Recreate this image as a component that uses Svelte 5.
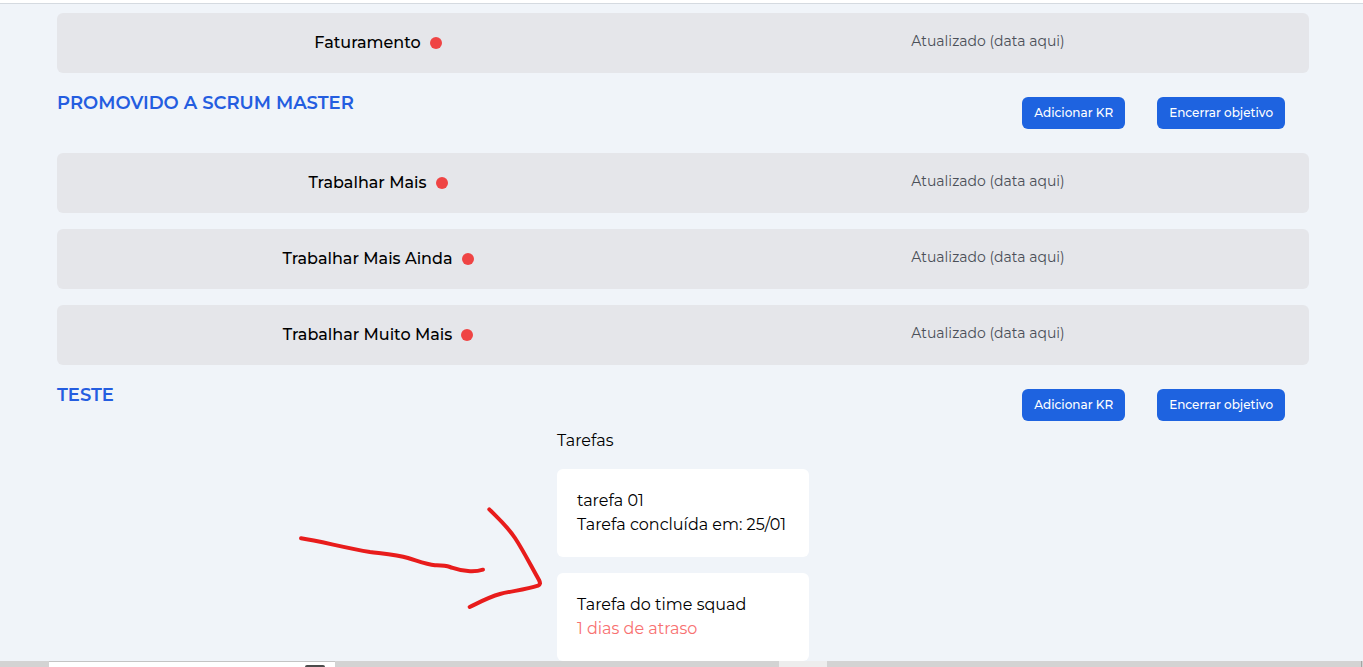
<script>
  const objectives = [
    { title: '', keyResults: ['Faturamento'], tasks: [] },
    {
      title: 'PROMOVIDO A SCRUM MASTER',
      keyResults: ['Trabalhar Mais', 'Trabalhar Mais Ainda', 'Trabalhar Muito Mais'],
      tasks: []
    },
    {
      title: 'TESTE',
      keyResults: [],
      tasks: [
        { name: 'tarefa 01', status: 'Tarefa concluída em: 25/01', late: false },
        { name: 'Tarefa do time squad', status: '1 dias de atraso', late: true }
      ]
    }
  ];
</script>

<div class="screen">
  <div class="topbar"></div>
  <main>
    {#each objectives as objective}
      <section>
        {#if objective.title}
          <header>
            <h2>{objective.title}</h2>
            <div class="actions">
              <button type="button">Adicionar KR</button>
              <button type="button">Encerrar objetivo</button>
            </div>
          </header>
        {/if}

        {#if objective.keyResults.length}
          <ul class="results">
            {#each objective.keyResults as name}
              <li class="result">
                <span class="name">{name}<span class="dot"></span></span>
                <span class="updated">Atualizado (data aqui)</span>
              </li>
            {/each}
          </ul>
        {/if}

        {#if objective.tasks.length}
          <div class="tasks">
            <h3>Tarefas</h3>
            {#each objective.tasks as task}
              <article>
                <p>{task.name}</p>
                <p class:late={task.late}>{task.status}</p>
              </article>
            {/each}
          </div>
        {/if}
      </section>
    {/each}
  </main>

  <svg class="arrow" width="250" height="110" viewBox="295 503 250 110" aria-hidden="true">
    <path d="M301 538.3C320 541 345 548 370 552C386 554 398 555 408 558C418 561 427 564.5 435 565.3C440 565.5 445 565.5 450 567C456 569 460 571 470 571.3C475 571.5 479 571 483 569.7" />
    <path d="M489.300 509.300C499 519 507 526 515 538C523 550 531 566 539 580C540.500 583 540.500 584.500 538 585.700C525 590 511 591 500 594C489 597 480 602 469.700 607" />
  </svg>

  <footer>
    <div class="search"><span class="glyph"></span></div>
    <div class="active"></div>
    <div class="corner"></div>
  </footer>
</div>

<style>
  :global(body) {
    margin: 0;
    background: #f0f4f9;
  }
  .screen {
    position: relative;
    display: flex;
    flex-direction: column;
    height: 100vh;
    overflow: hidden;
    font-family: Montserrat, Inter, sans-serif;
    font-size: 16px;
    line-height: 24px;
    color: #000;
  }
  .topbar {
    flex: none;
    height: 3px;
    background: #fff;
    border-bottom: 1px solid #d5dae0;
  }
  main {
    flex: 1;
    min-height: 0;
    overflow: hidden;
    padding: 9px 54px 0 57px;
  }
  header {
    display: flex;
    justify-content: space-between;
    align-items: flex-start;
    padding: 16px 24px 0 0;
  }
  h2 {
    margin: 0;
    font-size: 18px;
    line-height: 28px;
    font-weight: 600;
    color: #245de0;
  }
  .actions {
    display: flex;
    gap: 32px;
    padding-top: 8px;
  }
  button {
    height: 32px;
    padding: 0 12px;
    border: 0;
    border-radius: 6px;
    background: #1e63e0;
    color: #fff;
    font-family: inherit;
    font-size: 12px;
    font-weight: 500;
    line-height: 16px;
  }
  .results {
    display: flex;
    flex-direction: column;
    gap: 16px;
    margin: 0;
    padding: 0;
    list-style: none;
  }
  header + .results {
    margin-top: 24px;
  }
  .result {
    display: grid;
    grid-template-columns: 1fr 1fr;
    align-items: center;
    justify-items: center;
    height: 60px;
    padding: 0 16px;
    box-sizing: border-box;
    border-radius: 6px;
    background: #e5e6ea;
  }
  .name {
    display: flex;
    align-items: center;
    gap: 9px;
    font-weight: 500;
  }
  .dot {
    width: 12px;
    height: 12px;
    border-radius: 50%;
    background: #ef4444;
  }
  .updated {
    padding-bottom: 4px;
    font-size: 14px;
    line-height: 20px;
    color: #4b5058;
  }
  .tasks {
    display: flex;
    flex-direction: column;
    gap: 16px;
    width: 252px;
    margin: 8px auto 0;
  }
  h3 {
    margin: 0;
    font-size: 16px;
    font-weight: 400;
  }
  article {
    padding: 20px;
    border-radius: 6px;
    background: #fff;
  }
  p {
    margin: 0;
    white-space: nowrap;
  }
  .late {
    color: #f87171;
  }
  .arrow {
    position: absolute;
    left: 295px;
    top: 503px;
    fill: none;
    stroke: #e81c1c;
    stroke-width: 4;
    stroke-linecap: round;
    stroke-linejoin: round;
  }
  footer {
    display: flex;
    flex: none;
    height: 6px;
    background: #d3d3d3;
  }
  .search {
    display: flex;
    justify-content: flex-end;
    width: 286px;
    margin-left: 49px;
    padding: 3px 10px 0 0;
    box-sizing: border-box;
    border-top: 1px solid #c4c4c4;
    background: #fff;
  }
  .glyph {
    width: 20px;
    height: 2px;
    border-radius: 2px 2px 0 0;
    background: #4b4b4b;
  }
  .active {
    width: 48px;
    margin-left: 444px;
    background: #ededed;
  }
  .corner {
    width: 1px;
    margin-left: auto;
    margin-right: 1px;
    background: #a5a5a5;
  }
</style>
